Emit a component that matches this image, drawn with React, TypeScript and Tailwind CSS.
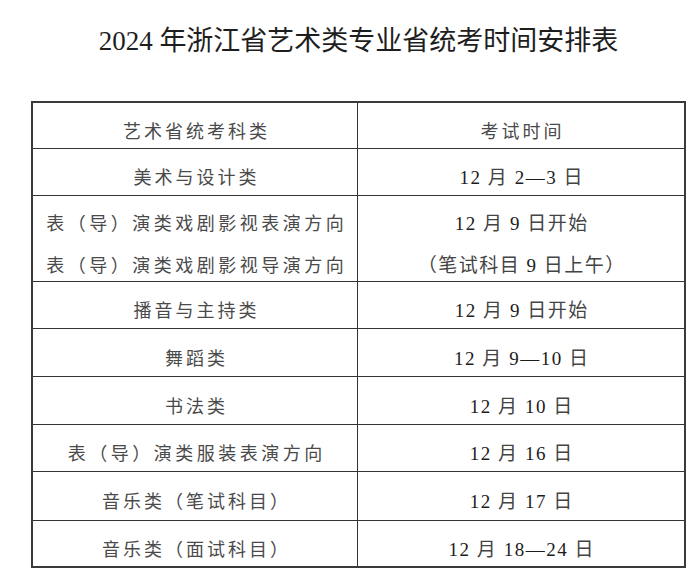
import React from 'react'

type Row = {
  left: string[]
  right: string[]
  h: string
  wide?: boolean
  head?: boolean
}

const rows: Row[] = [
  { left: ['艺术省统考科类'], right: ['考试时间'], h: 'h-[46px]', head: true },
  { left: ['美术与设计类'], right: ['12 月 2—3 日'], h: 'h-[47px]' },
  {
    left: ['表（导）演类戏剧影视表演方向', '表（导）演类戏剧影视导演方向'],
    right: ['12 月 9 日开始', '（笔试科目 9 日上午）'],
    h: 'h-[86px]',
    wide: true,
  },
  { left: ['播音与主持类'], right: ['12 月 9 日开始'], h: 'h-[47px]' },
  { left: ['舞蹈类'], right: ['12 月 9—10 日'], h: 'h-[48px]' },
  { left: ['书法类'], right: ['12 月 10 日'], h: 'h-[48px]' },
  { left: ['表（导）演类服装表演方向'], right: ['12 月 16 日'], h: 'h-[47px]', wide: true },
  { left: ['音乐类（笔试科目）'], right: ['12 月 17 日'], h: 'h-[49px]' },
  { left: ['音乐类（面试科目）'], right: ['12 月 18—24 日'], h: 'h-[45px]' },
]

// digits in the dates print darker than the CJK around them
const DateText: React.FC<{ text: string }> = ({ text }) => {
  const parts = text.split(/(\d+(?:—\d+)?)/)
  return (
    <>
      {parts.map((p, i) =>
        /\d/.test(p) ? (
          <span key={i} className="text-[#1c1c1c]">
            {p}
          </span>
        ) : (
          <span key={i}>{p}</span>
        ),
      )}
    </>
  )
}

export default function App() {
  return (
    <div
      className="w-[699px] h-[585px] bg-white"
      style={{ fontFamily: '"Liberation Serif", "Noto Sans CJK SC", serif' }}
    >
      <div className="ml-[31px] w-[655px]">
        <h1 className="mt-[23px] h-[36px] whitespace-nowrap text-center text-[27px] leading-[36px] font-normal text-[#1e1e1e]">
          2024 年浙江省艺术类专业省统考时间安排表
        </h1>
        <div className="mt-[42px] border-2 border-[#3a3a3a]">
          {rows.map((r, i) => (
            <div
              key={i}
              className={`flex ${r.h} ${i < rows.length - 1 ? 'border-b border-[#333]' : ''}`}
            >
              <div className="flex w-[325px] shrink-0 items-center justify-center border-r border-[#333] pt-3">
                <div
                  className={`whitespace-nowrap text-center text-[18px] text-[#4a4a4a] ${
                    r.left.length > 1 ? 'leading-[42px]' : 'leading-[26px]'
                  } ${r.wide ? 'tracking-[3.5px] pl-[3.5px]' : 'tracking-[3px] pl-[3px]'}`}
                >
                  {r.left.map((t) => (
                    <div key={t}>{t}</div>
                  ))}
                </div>
              </div>
              <div className="flex flex-1 items-center justify-center pt-3">
                {r.head ? (
                  <div className="whitespace-nowrap text-center text-[18px] leading-[26px] tracking-[3px] pl-[3px] text-[#4a4a4a]">
                    {r.right[0]}
                  </div>
                ) : (
                  <div
                    className={`whitespace-nowrap text-center text-[19px] tracking-[1.5px] pl-[1.5px] text-[#444] ${
                      r.right.length > 1 ? 'leading-[42px]' : 'leading-[26px]'
                    }`}
                  >
                    {r.right.map((t) => (
                      <div key={t}>
                        <DateText text={t} />
                      </div>
                    ))}
                  </div>
                )}
              </div>
            </div>
          ))}
        </div>
      </div>
    </div>
  )
}
